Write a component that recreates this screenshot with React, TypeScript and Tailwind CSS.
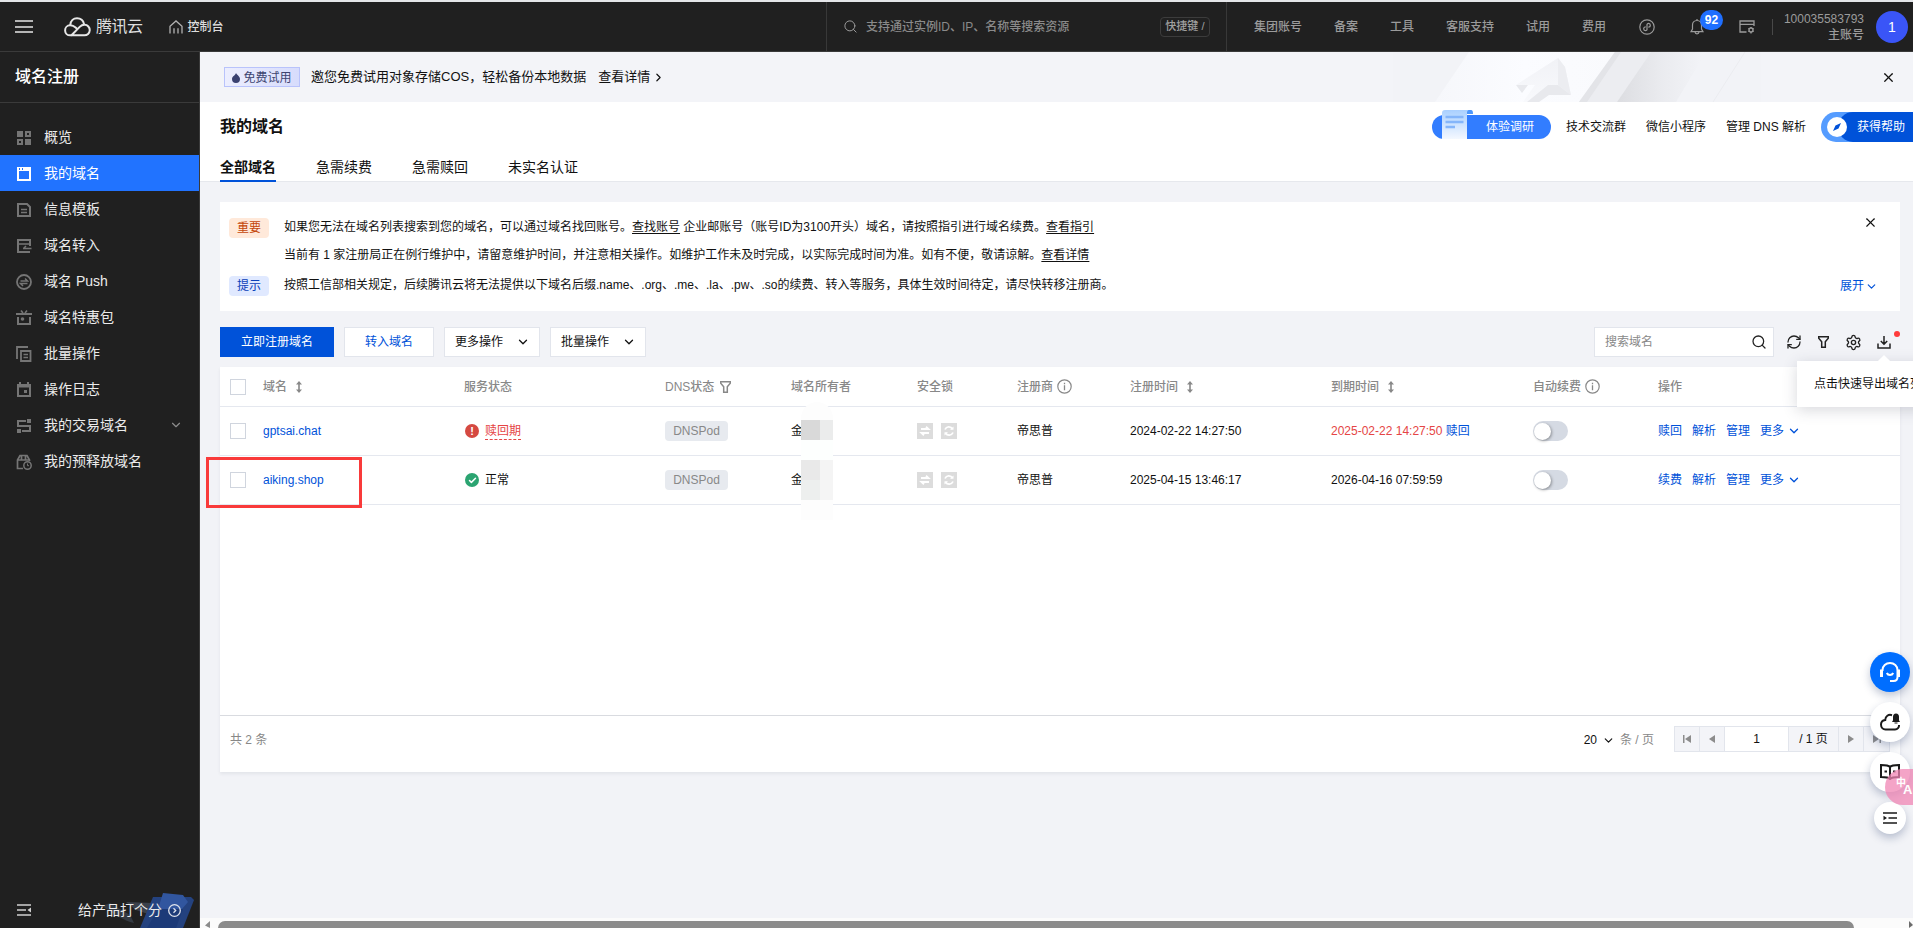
import { useState } from 'react'
import type { ReactNode } from 'react'
import clsx from 'clsx'
import { Check, ChevronDown, ChevronRight, RefreshCw, Search, Settings, X } from 'lucide-react'

const NAV_LINKS = ['集团账号', '备案', '工具', '客服支持', '试用', '费用']

const TABS = ['全部域名', '急需续费', '急需赎回', '未实名认证']

const TABLE_COLS =
  'grid grid-cols-[43px_201px_201px_126px_126px_100px_113px_201px_202px_125px_242px] items-center'

type Domain = {
  name: string
  ok: boolean
  status: string
  owner: string
  registrar: string
  createdAt: string
  expiresAt: string
  action: string
}

const DOMAINS: Domain[] = [
  {
    name: 'gptsai.chat',
    ok: false,
    status: '赎回期',
    owner: '金',
    registrar: '帝思普',
    createdAt: '2024-02-22 14:27:50',
    expiresAt: '2025-02-22 14:27:50',
    action: '赎回',
  },
  {
    name: 'aiking.shop',
    ok: true,
    status: '正常',
    owner: '金',
    registrar: '帝思普',
    createdAt: '2025-04-15 13:46:17',
    expiresAt: '2026-04-16 07:59:59',
    action: '续费',
  },
]

function MenuIcon({ children }: { children: ReactNode }) {
  return (
    <svg width="16" height="16" viewBox="0 0 16 16" fill="none" stroke="currentColor" strokeWidth="2">
      {children}
    </svg>
  )
}

const MENU: { label: string; icon: ReactNode; more?: boolean }[] = [
  {
    label: '概览',
    icon: (
      <>
        <path d="M1 1h6v6H1zM9 9h6v6H9z" fill="currentColor" stroke="none" />
        <path d="M10 2h4v4h-4zM2 10h4v4H2z" />
      </>
    ),
  },
  {
    label: '我的域名',
    icon: (
      <>
        <path d="M2 2h12v12H2z" />
        <path d="M1 3h14" strokeWidth="4" />
        <path d="M3 3h1M6 3h1" stroke="#2173ff" />
      </>
    ),
  },
  {
    label: '信息模板',
    icon: (
      <>
        <path d="M2 2h9l3 3v9H2z" />
        <path d="M5 7.5h6M5 10.5h6" strokeWidth="1.5" />
      </>
    ),
  },
  {
    label: '域名转入',
    icon: (
      <>
        <path d="M14 8V2H2v12h12" />
        <path d="M2 6h12M15.5 10.5H7M10 8l-2.5 2.5" strokeWidth="1.5" />
      </>
    ),
  },
  {
    label: '域名 Push',
    icon: (
      <>
        <circle cx="8" cy="8" r="7" strokeWidth="1.8" />
        <path d="M4.5 7h7L9 4.5M11.5 9.5h-7L7 12" strokeWidth="1.5" />
      </>
    ),
  },
  {
    label: '域名特惠包',
    icon: (
      <>
        <path d="M0 4h16M2 7v7h12V7" />
        <path d="M5 .5l2 2.5M11 .5L9 3" strokeWidth="1.6" />
        <circle cx="6.5" cy="9" r="1.8" fill="currentColor" stroke="none" />
      </>
    ),
  },
  {
    label: '批量操作',
    icon: (
      <>
        <path d="M1 13V1h11" strokeWidth="1.8" />
        <path d="M5 5h9.5v10H5z" strokeWidth="1.8" />
        <path d="M7.5 8.5h4.5M7.5 11.5h4.5" strokeWidth="1.4" />
      </>
    ),
  },
  {
    label: '操作日志',
    icon: (
      <>
        <path d="M2 3h12v11H2zM4 0v3M12 0v3" />
        <path d="M1 4h14" strokeWidth="3" />
        <path d="M8 8h3v3H8z" fill="currentColor" stroke="none" />
      </>
    ),
  },
  {
    label: '我的交易域名',
    more: true,
    icon: (
      <>
        <path d="M10 3H2v5h12v5H6" />
        <path d="M11 1h4v4h-4zM1 11h4v4H1z" fill="currentColor" stroke="none" />
      </>
    ),
  },
  {
    label: '我的预释放域名',
    icon: (
      <>
        <path d="M7 14.5H1.500V6L4 1.500h7L13.500 6v1M1 6h13M5.500 2v4M9.500 2v4" strokeWidth="1.7" />
        <circle cx="11.500" cy="11.500" r="3.700" strokeWidth="1.500" />
        <path d="M11.500 9.500v2.200h1.500" strokeWidth="1" />
      </>
    ),
  },
]

function SortIcon() {
  return (
    <svg className="ml-[9px]" width="6" height="12" viewBox="0 0 6 12" fill="#888">
      <path d="M3 0l3 3.500H0zM3 12L0 8.500h6zM2.200 3h1.600v6H2.200z" />
    </svg>
  )
}

function InfoIcon() {
  return (
    <svg className="ml-1" width="15" height="15" viewBox="0 0 15 15" fill="none" stroke="#888">
      <circle cx="7.500" cy="7.500" r="6.700" strokeWidth="1.200" />
      <path d="M7.500 6.300v5M7.500 3.800v1.400" strokeWidth="1.300" />
    </svg>
  )
}

function FilterIcon({ className }: { className?: string }) {
  return (
    <svg className={className} width="11" height="12" viewBox="0 0 11 12" fill="none" stroke="currentColor" strokeWidth="1.5">
      <path d="M.7.8h9.600v1.400L7.300 5.800v5.400H3.700V5.800L.7 2.200z" />
    </svg>
  )
}

function Header() {
  return (
    <header className="flex h-[52px] shrink-0 items-center border-t-2 border-b border-t-[#e4e6e9] border-b-[#3a3a3a] bg-[#202020] text-xs font-medium text-[#9b9b9b]">
      <div className="ml-[15px] flex w-[18px] flex-col gap-[3.500px]">
        <span className="h-0.5 bg-[#b5b5b5]" />
        <span className="h-0.5 bg-[#b5b5b5]" />
        <span className="h-0.5 bg-[#b5b5b5]" />
      </div>
      <svg className="ml-[31px]" width="27" height="20" viewBox="0 0 27 20" fill="none" stroke="#e6e6e6" strokeWidth="2">
        <path d="M8 18.300H6.200a5 5 0 0 1-.2-10c2.400-.1 4 .8 5.600 2.300l1.800 1.700" />
        <path d="M6.300 8C6.600 3.800 9.500 1.300 13 1.300c3.600 0 6.300 2.300 7 5.800" />
        <path d="M7.500 18.300h12.800a5 5 0 0 0 .4-10.500c-2-.1-3.600.7-5 2.100L7.500 18.300" />
      </svg>
      <span className="ml-[5px] text-base font-normal tracking-[-0.5px] text-[#dedede]">腾讯云</span>
      <svg className="ml-[26px]" width="14" height="14" viewBox="0 0 14 14" fill="none" stroke="#b0b0b0" strokeWidth="1.300">
        <path d="M1 13.500V6.200L7 .9l6 5.300v7.300M5 13.500V8.200M9 13.500V8.200" />
      </svg>
      <span className="ml-[5px] text-[#dcdcdc]">控制台</span>

      <div className="ml-auto flex h-full w-[401px] shrink-0 items-center border-x border-[#383838] pr-4 pl-4">
        <Search size={15} strokeWidth={1.600} />
        <span className="ml-2 text-[#8a8a8a]">支持通过实例ID、IP、名称等搜索资源</span>
        <span className="ml-auto flex h-5 w-[50px] items-center justify-center rounded-sm border border-[#3c3c3c] text-[11px] whitespace-nowrap text-[#a0a0a0]">
          快捷键 /
        </span>
      </div>

      <nav className="flex gap-8 pl-[27px]">
        {NAV_LINKS.map((l) => (
          <a key={l}>{l}</a>
        ))}
      </nav>
      <svg className="ml-[33px]" width="16" height="16" viewBox="0 0 16 16" fill="none" stroke="#9b9b9b" strokeWidth="1.200">
        <circle cx="8" cy="8" r="7.200" />
        <path d="M8 10.500V5.600c0-1.700 3.300-1.800 3.300.6 0 1.300-1 1.900-2 1.900M8 5.500v4.900c0 1.700-3.300 1.800-3.300-.6 0-1.300 1-1.900 2-1.900" />
      </svg>
      <div className="relative ml-[35px]">
        <svg width="14" height="16" viewBox="0 0 14 16" fill="none" stroke="#9b9b9b" strokeWidth="1.200">
          <path d="M7 1.500c-3 0-4.500 2-4.500 4.500v4L1 12.700h12L11.500 10V6C11.500 3.500 10 1.500 7 1.500zM7 0v1.500M5 13c.2 2.500 3.800 2.500 4 0" />
        </svg>
        <span className="absolute -top-[9px] left-[10px] flex h-5 w-[23px] items-center justify-center rounded-full bg-[#1f6fff] text-xs font-bold text-white">
          92
        </span>
      </div>
      <svg className="ml-[35px]" width="16" height="14" viewBox="0 0 16 14" fill="none" stroke="#9b9b9b" strokeWidth="1.300">
        <path d="M7.500 12H1V1h14v5M1 4.300h14" />
        <circle cx="12" cy="10" r="2" />
        <path d="M12 7v1M12 12v1.500M9.300 8.500l1 .5M13.700 11l1 .5M9.300 11.500l1-.5M13.700 9l1-.5" />
      </svg>
      <div className="ml-[17px] h-4 w-px bg-[#484848]" />
      <div className="w-[91px] text-right leading-4">
        <div>100035583793</div>
        <div>主账号</div>
      </div>
      <div className="mr-[5px] ml-3 flex size-8 items-center justify-center rounded-full bg-[#3a55f7] text-sm text-white">
        1
      </div>
    </header>
  )
}

function Sidebar() {
  return (
    <aside className="flex w-[200px] shrink-0 flex-col border-r border-[#3a3a3a] bg-[#202020] text-sm text-[#ececec]">
      <div className="flex h-[51px] items-center border-b border-[#3a3a3a] pl-[15px] text-base font-medium text-white">
        域名注册
      </div>
      <ul className="mt-4">
        {MENU.map((m) => (
          <li
            key={m.label}
            className={clsx(
              'flex h-9 items-center pl-4',
              m.label === '我的域名' ? 'bg-[#2173ff] text-white' : 'text-[#ececec]'
            )}
          >
            <span className={clsx('mt-0.5', m.label !== '我的域名' && 'text-[#757575]')}>
              <MenuIcon>{m.icon}</MenuIcon>
            </span>
            <span className="ml-3">{m.label}</span>
            {m.more && <ChevronDown className="mr-4 ml-auto text-[#8c8c8c]" size={14} />}
          </li>
        ))}
      </ul>
      <div className="relative mt-auto flex h-[36px] items-center pl-[17px]">
        <svg className="absolute right-[5px] bottom-0" width="92" height="35" viewBox="0 0 92 35">
          <path d="M0 13l8-3 20 12 4 8c-10-2-22-10-32-17z" fill="#343a42" />
          <path d="M24 9l28 1 14 6-8 9-24-8z" fill="#3b414b" />
          <path d="M51 4h38l3 3-11 28H38z" fill="#24427f" />
          <path d="M61 0l20 2 5 7-6 7H56z" fill="#31569f" />
          <path d="M56 16h25l-7 19H45z" fill="#1c3a78" />
        </svg>
        <svg width="14" height="12" viewBox="0 0 14 12" stroke="#d0d0d0" strokeWidth="1.600">
          <path d="M0 1h14M0 6h9M0 11h14" />
          <path d="M14 3.500v5L10.500 6z" fill="#d0d0d0" stroke="none" />
        </svg>
        <span className="relative ml-[47px]">给产品打个分</span>
        <svg className="relative ml-1.5" width="13" height="13" viewBox="0 0 13 13" fill="none" stroke="#dfe3ec" strokeWidth="1.300">
          <circle cx="6.500" cy="6.500" r="5.800" />
          <path d="M5.500 4.300l2.200 2.200-2.200 2.200" />
        </svg>
      </div>
    </aside>
  )
}

function Banner() {
  return (
    <div className="relative flex h-[50px] items-center bg-[#f3f4f8] pl-6">
      <svg className="absolute top-0 right-[152px]" width="368" height="50" viewBox="0 0 368 50">
        <defs>
          <linearGradient id="slab" x1="0" y1="0" x2="1" y2="0">
            <stop offset="0" stopColor="#f6f7fb" />
            <stop offset="0.500" stopColor="#fbfcff" />
            <stop offset="1" stopColor="#f9fafd" />
          </linearGradient>
          <linearGradient id="shade" x1="0" y1="0" x2="1" y2="0">
            <stop offset="0" stopColor="#dcdde1" />
            <stop offset="0.500" stopColor="#eaebef" />
            <stop offset="1" stopColor="#f3f4f8" />
          </linearGradient>
          <linearGradient id="arrow" x1="0" y1="0" x2="0" y2="1">
            <stop offset="0" stopColor="#f1f2f6" />
            <stop offset="1" stopColor="#f8f9fc" />
          </linearGradient>
        </defs>
        <path d="M0 0h368v50H0z" fill="#f2f3f7" />
        <path d="M76 0h146l-34 50H42z" fill="url(#slab)" />
        <path d="M222 0h36l-34 50h-38z" fill="#ecedf1" />
        <path d="M222 0h6l-34 50h-8z" fill="#e3e4e8" />
        <path d="M258 0h55l-30 50h-59z" fill="url(#shade)" />
        <path d="M352 0l-32 50" stroke="#ebecf0" />
        <path d="M123 33l42-27 7 9 6 28h-12l-10-9-9 16h-17l12-17z" fill="url(#arrow)" />
        <path d="M165 6l7 9 6 28-13-10z" fill="#ecedf1" />
        <path d="M123 33h12l-6 8zM155 33h10l13 10h-22l-10 7h-12z" fill="#e8e9ed" />
      </svg>
      <span className="flex h-5 w-[76px] items-center justify-center border border-[#b9c3fb] bg-gradient-to-r from-[#eceefe] to-[#d7dcfc] pt-px text-xs text-[#3d4470]">
        <svg className="mr-[3px]" width="8" height="10" viewBox="0 0 8 10" fill="#3a4170">
          <path d="M4 0c1 2 4 3.500 4 6a4 4 0 0 1-8 0c0-1.500.8-2.300 1.600-3C2.500 2.300 3.500 1.500 4 0z" />
        </svg>
        免费试用
      </span>
      <span className="ml-[11px] text-[13px]">邀您免费试用对象存储COS，轻松备份本地数据</span>
      <span className="ml-3 text-[13px]">查看详情</span>
      <ChevronRight className="ml-0.5" size={13} strokeWidth={2.200} />
      <X className="relative mr-[17px] ml-auto" size={15} strokeWidth={2} />
    </div>
  )
}

function PageHead() {
  const [tab, setTab] = useState(TABS[0])

  return (
    <div className="h-20 border-b border-[#e6e8ed] bg-white">
      <div className="flex h-[49px] items-center pl-5">
        <h1 className="text-base font-bold">我的域名</h1>
        <div className="ml-auto flex items-center text-xs">
          <div className="relative flex h-6 w-[119px] items-center rounded-full bg-[#327dff] pl-[54px] text-white">
            <svg className="absolute bottom-0 left-[10px]" width="31" height="29" viewBox="0 0 31 29">
              <defs>
                <linearGradient id="paper" x1="0" y1="0" x2="0" y2="1">
                  <stop offset="0" stopColor="#a9d0ff" />
                  <stop offset="1" stopColor="#f4f8ff" />
                </linearGradient>
              </defs>
              <path d="M24 0h5c1.500 0 2 1 2 4h-6z" fill="#4d97fb" />
              <path d="M3 0h24c-1.500 0-2 1.500-2 3v26H0V3c0-2 1-3 3-3z" fill="url(#paper)" />
              <path d="M3.500 7h18M3.500 12h18M3.500 17H13" stroke="#85b6fa" strokeWidth="2.400" />
            </svg>
            体验调研
          </div>
          <span className="mt-px ml-[15px]">技术交流群</span>
          <span className="mt-px ml-5">微信小程序</span>
          <span className="ml-5">管理 DNS 解析</span>
          <div className="ml-[15px] flex h-[30px] w-[92px] items-center rounded-l-full bg-[#559cff]">
            <div className="ml-[17px] h-full grow rounded-l-full bg-[#0052d9]" />
            <div className="absolute flex items-center text-white">
              <svg className="ml-1.5" width="20" height="20" viewBox="0 0 20 20">
                <circle cx="10" cy="10" r="10" fill="#fff" />
                <path d="M14 6l-2.500 5.500L6 14l2.500-5.500z" fill="#0052d9" />
              </svg>
              <span className="ml-2.5">获得帮助</span>
            </div>
          </div>
        </div>
      </div>
      <div className="flex gap-10 pl-5 text-sm">
        {TABS.map((t) => (
          <button
            key={t}
            onClick={() => setTab(t)}
            className={clsx(
              'h-[31px] border-b-2 pt-0.5',
              t === tab ? 'border-[#0052d9] font-bold' : 'border-transparent'
            )}
          >
            {t}
          </button>
        ))}
      </div>
    </div>
  )
}

function Notice() {
  return (
    <div className="mt-5 flex h-[109px] bg-white pt-4 pr-[22px] pl-[9px] text-xs">
      <div className="flex flex-col">
        <span className="flex h-5 w-10 items-center justify-center rounded-sm bg-[#ffe9da] text-[#c4460a]">重要</span>
        <span className="mt-[38px] flex h-5 w-10 items-center justify-center rounded-sm bg-[#e0e9ff] text-[#0b3fb8]">提示</span>
      </div>
      <div className="ml-[15px] whitespace-nowrap">
        <p className="leading-[19px]">
          如果您无法在域名列表搜索到您的域名，可以通过域名找回账号。
          <a className="underline underline-offset-2">查找账号</a> 企业邮账号（账号ID为3100开头）域名，请按照指引进行域名续费。
          <a className="underline underline-offset-2">查看指引</a>
        </p>
        <p className="mt-[9px] leading-[19px]">
          当前有 1 家注册局正在例行维护中，请留意维护时间，并注意相关操作。如维护工作未及时完成，以实际完成时间为准。如有不便，敬请谅解。
          <a className="underline underline-offset-2">查看详情</a>
        </p>
        <p className="mt-[11px] leading-[19px]">
          按照工信部相关规定，后续腾讯云将无法提供以下域名后缀.name、.org、.me、.la、.pw、.so的续费、转入等服务，具体生效时间待定，请尽快转移注册商。
        </p>
      </div>
      <div className="ml-auto flex flex-col items-end">
        <X className="-mt-[3px]" size={15} strokeWidth={1.800} />
        <span className="mt-12 flex items-center gap-px text-[#0052d9]">
          展开 <ChevronDown size={13} strokeWidth={2.200} />
        </span>
      </div>
    </div>
  )
}

function Toolbar() {
  return (
    <div className="mt-4 flex h-[30px] text-xs">
      <button className="w-[114px] bg-[#0052d9] text-white">立即注册域名</button>
      <button className="ml-2.5 w-[90px] border border-[#e2e5ec] bg-white text-[#0052d9]">转入域名</button>
      <button className="ml-2.5 flex w-24 items-center justify-between border border-[#e2e5ec] bg-white pr-[9px] pl-2.5">
        更多操作 <ChevronDown size={14} strokeWidth={2.200} />
      </button>
      <button className="ml-2.5 flex w-24 items-center justify-between border border-[#e2e5ec] bg-white pr-[9px] pl-2.5">
        批量操作 <ChevronDown size={14} strokeWidth={2.200} />
      </button>
      <div className="ml-auto flex items-center text-[#222]">
        <div className="flex h-full w-[180px] items-center justify-between border border-[#e2e5ec] bg-white pr-1.5 pl-2.5 text-[#888]">
          搜索域名 <Search className="text-[#222]" size={16} strokeWidth={1.900} />
        </div>
        <RefreshCw className="ml-3" size={16} strokeWidth={1.900} />
        <FilterIcon className="ml-4" />
        <Settings className="ml-4" size={17} strokeWidth={1.900} />
        <div className="relative mr-[9px] ml-[15px]">
          <svg width="14" height="14" viewBox="0 0 14 14" fill="none" stroke="currentColor" strokeWidth="1.500">
            <path d="M1 8.500V13h12V8.500M7 1v8M3.800 6L7 9.200 10.200 6" />
          </svg>
          <span className="absolute -top-[4px] left-[17px] size-1.5 rounded-full bg-[#ff3b3b]" />
          <div className="absolute top-[26px] -left-[80px] z-10 h-[46px] w-[170px] bg-white pl-[17px] leading-[46px] whitespace-nowrap text-[#111] shadow-[0_3px_14px_rgba(54,58,80,0.2)]">
            <span className="absolute -top-[4px] left-[82px] size-2.5 rotate-45 bg-white" />
            点击快速导出域名列表
          </div>
        </div>
      </div>
    </div>
  )
}

function Checkbox() {
  return <span className="ml-2.5 block size-4 border border-[#d0d5de] bg-white" />
}

function Row({ d }: { d: Domain }) {
  return (
    <div className={`${TABLE_COLS} h-[49px] border-b border-[#e5e8ef]`}>
      <Checkbox />
      <a className="text-[#0052d9]">{d.name}</a>
      <div className="flex items-center">
        {d.ok ? (
          <span className="ml-px flex size-3.5 items-center justify-center rounded-full bg-[#2ba471] text-white">
            <Check size={9} strokeWidth={4} />
          </span>
        ) : (
          <span className="ml-px flex size-3.5 items-center justify-center rounded-full bg-[#d54941] text-[11px] font-bold text-white">
            !
          </span>
        )}
        <span
          className={clsx(
            'ml-1.5 leading-4',
            d.ok ? 'mb-px' : 'border-b border-dashed border-[#e54545] text-[#e54545]'
          )}
        >
          {d.status}
        </span>
      </div>
      <span className="flex h-5 w-[63px] items-center justify-center rounded-sm bg-[#e7eaef] text-[#888]">DNSPod</span>
      <span>{d.owner}</span>
      <div className="flex gap-2">
        <svg width="16" height="16" viewBox="0 0 16 16" fill="none" stroke="#fff" strokeWidth="1.800">
          <path d="M0 0h16v16H0z" fill="#dcdcdc" stroke="none" />
          <path d="M4 6h7.500L9 3.800M12 10H4.500L7 12.200" />
        </svg>
        <svg width="16" height="16" viewBox="0 0 16 16" fill="none" stroke="#fff" strokeWidth="1.800">
          <path d="M0 0h16v16H0z" fill="#dcdcdc" stroke="none" />
          <path d="M4 6.500a4.200 4.200 0 0 1 7.500-.5M12 9.500a4.200 4.200 0 0 1-7.500.5" />
          <path d="M12.500 3.500v3.300H9zM3.500 12.500V9.200H7z" fill="#fff" stroke="none" />
        </svg>
      </div>
      <span>{d.registrar}</span>
      <span>{d.createdAt}</span>
      <span>
        {d.ok ? (
          d.expiresAt
        ) : (
          <>
            <span className="text-[#e54545]">{d.expiresAt}</span> <a className="text-[#0052d9]">赎回</a>
          </>
        )}
      </span>
      <span className="flex h-5 w-[35px] items-center rounded-full bg-[#d5dae3] pl-px">
        <span className="size-[17px] rounded-full bg-white shadow-[1px_1px_3px_rgba(0,0,0,0.35)]" />
      </span>
      <div className="flex items-center gap-2.5 text-[#0052d9]">
        <a>{d.action}</a>
        <a>解析</a>
        <a>管理</a>
        <a className="mb-px flex items-center gap-[3px]">
          更多 <ChevronDown size={14} strokeWidth={2.200} />
        </a>
      </div>
    </div>
  )
}

function Pager() {
  const cell = 'flex items-center justify-center border-r border-[#e2e5ec]'
  return (
    <div className="flex h-[57px] items-start border-t border-[#d9dbe0] pt-2.5 pr-2.5 pl-2.5">
      <span className="leading-[28px] text-[#888]">共 2 条</span>
      <span className="ml-auto flex h-[28px] items-center gap-[5px]">
        20 <ChevronDown size={13} strokeWidth={2.200} />
        <span className="text-[#888]">条 / 页</span>
      </span>
      <div className="ml-5 flex h-[26px] border border-[#e2e5ec] bg-[#f3f4f8] text-[#8c8c8c]">
        <span className={`${cell} w-[25px]`}>
          <svg width="8" height="8" viewBox="0 0 8 8" fill="currentColor">
            <path d="M0 0h1.500v8H0zM8 0v8L2 4z" />
          </svg>
        </span>
        <span className={`${cell} w-[25px]`}>
          <svg width="6" height="8" viewBox="0 0 6 8" fill="currentColor">
            <path d="M6 0v8L0 4z" />
          </svg>
        </span>
        <span className={`${cell} w-[64px] bg-white text-[#111]`}>1</span>
        <span className={`${cell} w-[50px] text-[#111]`}>/ 1 页</span>
        <span className={`${cell} w-[25px]`}>
          <svg width="6" height="8" viewBox="0 0 6 8" fill="currentColor">
            <path d="M0 0v8l6-4z" />
          </svg>
        </span>
        <span className="flex w-[25px] items-center justify-center">
          <svg width="8" height="8" viewBox="0 0 8 8" fill="currentColor">
            <path d="M6.500 0H8v8H6.500zM0 0v8l6-4z" />
          </svg>
        </span>
      </div>
    </div>
  )
}

// pixelated patches over the owner names
function OwnerMask() {
  return (
    <div className="absolute top-[35px] left-[581px] w-8">
      <div className="h-[18px] rounded-t-full bg-[#fdfdfd]" />
      <div className="flex h-5">
        <div className="w-[19px] bg-[#d9d9d9]" />
        <div className="grow bg-[#ebecec]" />
      </div>
      <div className="h-5 bg-[#fdfffe]" />
      <div className="flex h-5">
        <div className="w-[19px] bg-[#e9e9e9]" />
        <div className="grow bg-[#f4f4f4]" />
      </div>
      <div className="flex h-5">
        <div className="w-[19px] bg-[#edefee]" />
        <div className="grow bg-[#f5f5f5]" />
      </div>
      <div className="h-5 bg-[#fdfdfd]" />
    </div>
  )
}

function DomainTable() {
  return (
    <div className="relative mt-2.5 flex h-[405px] flex-col bg-white text-xs shadow-[0_2px_3px_rgba(54,58,80,0.08)]">
      <div className={`${TABLE_COLS} h-10 border-b border-[#e5e8ef] font-medium text-[#888]`}>
        <Checkbox />
        <span className="flex items-center">
          域名 <SortIcon />
        </span>
        <span>服务状态</span>
        <span className="flex items-center">
          DNS状态 <FilterIcon className="ml-1.5" />
        </span>
        <span>域名所有者</span>
        <span>安全锁</span>
        <span className="flex items-center">
          注册商 <InfoIcon />
        </span>
        <span className="flex items-center">
          注册时间 <SortIcon />
        </span>
        <span className="flex items-center">
          到期时间 <SortIcon />
        </span>
        <span className="flex items-center">
          自动续费 <InfoIcon />
        </span>
        <span>操作</span>
      </div>
      {DOMAINS.map((d) => (
        <Row key={d.name} d={d} />
      ))}
      <OwnerMask />
      <div className="absolute top-[90px] -left-[14px] h-[51px] w-[156px] border-[3px] border-[#f93a3a]" />
      <div className="mt-auto">
        <Pager />
      </div>
    </div>
  )
}

function FloatButtons() {
  const base = 'flex items-center justify-center rounded-full shadow-[0_4px_8px_rgba(30,50,100,0.28)]'
  return (
    <div className="absolute top-[652px] right-[3px] z-20 flex w-10 flex-col items-center gap-2.5">
      <div className={`${base} size-10 bg-[#006eff]`}>
        <svg width="20" height="20" viewBox="0 0 20 20" fill="none" stroke="#fff" strokeWidth="2">
          <path d="M2.500 9V8a7.500 7 0 0 1 15 0v7c0 2.500-1.500 4-4 4H10" />
          <path d="M1.500 7.500v7.500M18.500 7.500v7.500" strokeWidth="3" />
          <path d="M6.800 11c1.200 2.600 5.200 2.600 6.400 0" />
        </svg>
      </div>
      <div className={`${base} size-10 bg-white`}>
        <svg width="20" height="18" viewBox="0 0 20 18" fill="none" stroke="#1a1a1a" strokeWidth="2">
          <path d="M12 2.200C8.500 1 5.300 3.200 5.200 7 2.800 7.300 1 9 1 11.600 1 14.500 3 16.500 5.500 16.500h9.500c2.500 0 4.200-2 4-4.500" />
          <path d="M16 .5c-2 0-3 1.400-3 3.200v3.500L12 9h8l-1-1.800V3.700C19 1.900 18 .5 16 .5z" fill="#1a1a1a" stroke="none" />
          <path d="M14.500 10h3" strokeWidth="1" />
        </svg>
      </div>
      <div className={`${base} size-10 bg-white`}>
        <svg width="20" height="16" viewBox="0 0 20 16" fill="none" stroke="#1a1a1a" strokeWidth="2">
          <path d="M10 3C8.500 1.200 6 1 1 1v12c5 0 7.500.2 9 2 1.500-1.800 4-2 9-2V1c-5 0-7.500.2-9 2zM10 3v12" />
          <path d="M4.500 7.500H7M13 7.500h2.500" />
        </svg>
      </div>
      <div className={`${base} size-8 bg-white`}>
        <svg width="14" height="12" viewBox="0 0 14 12" stroke="#1a1a1a" strokeWidth="1.600">
          <path d="M0 1h14M5.500 6H14M0 11h14" />
          <path d="M.5 3.800v4.400L4 6z" fill="#1a1a1a" stroke="none" />
        </svg>
      </div>
      <div className="absolute top-[117px] left-[15px] flex h-9 w-[28px] items-center overflow-hidden rounded-l-full bg-[#f086b4]/75 pl-[11px] font-bold whitespace-nowrap text-white">
        <span className="-mt-2.5 text-[10px]">中</span>
        <span className="mt-1.5 -ml-[3px] text-[13px]">A</span>
      </div>
    </div>
  )
}

export default function App() {
  return (
    <div className="relative flex h-[928px] w-full flex-col overflow-hidden font-['Liberation_Sans','Noto_Sans_CJK_SC',sans-serif] text-[#111]">
      <Header />
      <div className="flex min-h-0 grow">
        <Sidebar />
        <main className="flex min-w-0 grow flex-col bg-[#f2f3f7]">
          <Banner />
          <PageHead />
          <div className="grow pr-[13px] pl-5">
            <Notice />
            <Toolbar />
            <DomainTable />
          </div>
          <div className="flex h-2.5 items-end bg-[#fbfbfb] pl-[5px]">
            <svg width="5" height="7" viewBox="0 0 5 7" fill="#8b8b8b">
              <path d="M5 0v7L0 4.500z" />
            </svg>
            <div className="ml-2 h-[7px] w-[1636px] rounded-t-lg bg-[#8b8b8b]" />
            <svg className="ml-auto" width="4" height="7" viewBox="0 0 4 7" fill="#6b6b6b">
              <path d="M0 0v7l4-3z" />
            </svg>
          </div>
        </main>
      </div>
      <FloatButtons />
    </div>
  )
}
